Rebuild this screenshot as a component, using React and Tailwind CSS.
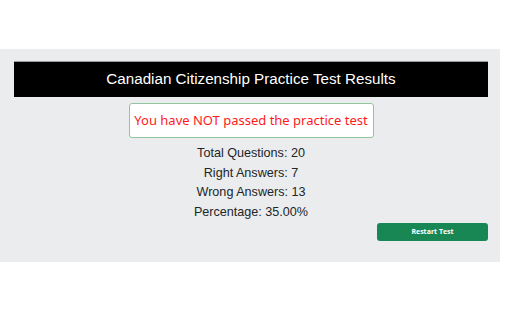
export default function App() {
    return (
        <div className="w-[512px] h-[320px] bg-white overflow-hidden" style={{ fontFamily: '"Liberation Sans", Arial, sans-serif' }}>
            <div className="mt-[49px] w-[500px] h-[213px] bg-[#ebeced] pt-[12px] pl-[14px] pr-[12px]">
                <div className="h-[36px] bg-black border-t border-[#9a9a9a] flex items-center justify-center">
                    <h1 className="text-white text-[15.2px]">Canadian Citizenship Practice Test Results</h1>
                </div>
                <div className="flex flex-col items-center">
                    <div
                        className="mt-[6px] w-[245px] h-[35px] bg-white border border-[#93c4a0] rounded-[3px] flex items-center justify-center text-[#ff1a1a] text-[13px] whitespace-nowrap"
                        style={{ fontFamily: '"Noto Sans", "Open Sans", sans-serif' }}
                    >
                        You have NOT passed the practice test
                    </div>
                    <div className="mt-[6px] text-[12.6px] leading-[19.5px] text-[#212529] text-center">
                        <p>Total Questions: 20</p>
                        <p>Right Answers: 7</p>
                        <p>Wrong Answers: 13</p>
                        <p>Percentage: 35.00%</p>
                    </div>
                </div>
                <div className="flex justify-end mt-[1px]">
                    <button
                        className="w-[111px] h-[18px] bg-[#198754] rounded-[3px] text-white text-[7px] font-bold"
                        style={{ fontFamily: '"Open Sans", sans-serif' }}
                    >
                        Restart Test
                    </button>
                </div>
            </div>
        </div>
    );
}
